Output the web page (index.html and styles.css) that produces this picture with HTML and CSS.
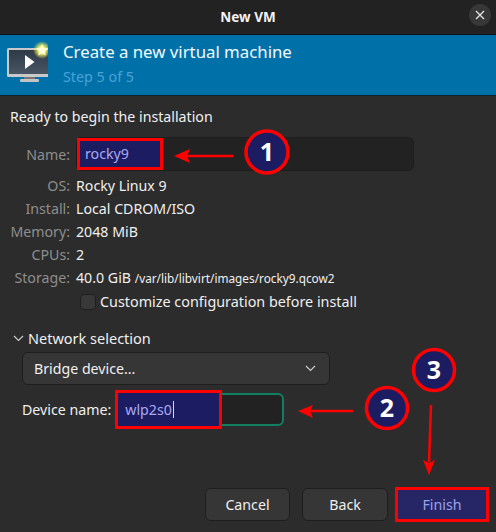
FILE: index.html
```html
<!DOCTYPE html>
<html lang="en">
<head>
<meta charset="utf-8">
<title>New VM</title>
<link rel="stylesheet" href="styles.css">
</head>
<body>
<div class="window">
  <header class="titlebar">
    <span class="title">New VM</span>
    <span class="close"><svg width="10" height="10" viewBox="0 0 10 10"><path d="M1 1L9 9M9 1L1 9" stroke="#e6e6e6" stroke-width="1.3" fill="none"/></svg></span>
  </header>
  <section class="banner">
    <svg class="vm-icon" width="48" height="44" viewBox="0 0 48 44">
      <defs>
        <radialGradient id="glow"><stop offset="0.4" stop-color="#f4f25a"/><stop offset="1" stop-color="#f4f25a" stop-opacity="0"/></radialGradient>
        <linearGradient id="scr" x1="0" y1="0" x2="0" y2="1"><stop offset="0" stop-color="#2f3a48"/><stop offset="1" stop-color="#4a5563"/></linearGradient>
      </defs>
      <rect x="7" y="9" width="44" height="29" rx="1.5" fill="#c9c9c9"/>
      <rect x="9" y="11" width="39" height="24" fill="url(#scr)"/>
      <path d="M25 16L34.500 23L25 30Z" fill="#fff"/>
      <rect x="24" y="38" width="11" height="3" fill="#777"/>
      <rect x="20" y="40" width="19" height="3" rx="1" fill="#c4c4c4"/>
      <circle cx="42" cy="11" r="9" fill="url(#glow)"/>
      <path d="M42 5L43.800 9L48 9.400L44.800 12.200L45.800 16.500L42 14.200L38.200 16.500L39.200 12.200L36 9.400L40.200 9Z" fill="#fffde0"/>
    </svg>
    <div class="banner-text">
      <div class="banner-title">Create a new virtual machine</div>
      <div class="banner-step">Step 5 of 5</div>
    </div>
  </section>
  <main class="content">
    <p class="ready">Ready to begin the installation</p>
    <div class="summary">
      <span class="label name-label">Name:</span>
      <div class="entry name-entry"><span class="hl">rocky9</span></div>
      <span class="label">OS:</span><span class="value">Rocky Linux 9</span>
      <span class="label">Install:</span><span class="value">Local CDROM/ISO</span>
      <span class="label">Memory:</span><span class="value">2048 MiB</span>
      <span class="label">CPUs:</span><span class="value">2</span>
      <span class="label">Storage:</span><span class="value">40.0 GiB <small class="path">/var/lib/libvirt/images/rocky9.qcow2</small></span>
    </div>
    <label class="check-row"><span class="check"></span><span>Customize configuration before install</span></label>
    <div class="expander">
      <svg width="11" height="7" viewBox="0 0 11 7"><path d="M1 1L5.500 5.500L10 1" stroke="#d0d0d0" stroke-width="1.1" fill="none"/></svg>
      <span>Network selection</span>
    </div>
    <div class="network">
      <div class="combo"><span>Bridge device...</span>
        <svg width="11" height="7" viewBox="0 0 11 7"><path d="M1 1L5.500 5.500L10 1" stroke="#d0d0d0" stroke-width="1.1" fill="none"/></svg>
      </div>
      <div class="device-row">
        <span>Device name:</span>
        <div class="entry device-entry"><span class="hl2">wlp2s0<i class="caret"></i></span></div>
      </div>
    </div>
    <footer class="actions">
      <button class="btn cancel">Cancel</button>
      <button class="btn back">Back</button>
      <button class="btn finish">Finish</button>
    </footer>
  </main>
  <svg class="annot" width="496" height="532" viewBox="0 0 496 532">
    <g stroke="#f00" stroke-width="2.500" fill="none">
      <path d="M233 156H186"/>
      <path d="M353 411H309"/>
      <path d="M431 405L429 462"/>
    </g>
    <g fill="#f00">
      <path d="M174 156L190 149L187 156L190 163Z"/>
      <path d="M298 411L313 405L310 411L313 418Z"/>
      <path d="M429 475L423 460L429 463L435 460Z"/>
    </g>
    <g fill="#1c1c63" stroke="#f00" stroke-width="3.500">
      <circle cx="267" cy="152" r="21"/>
      <circle cx="387" cy="408" r="20.500"/>
      <circle cx="434" cy="370" r="20.500"/>
    </g>
    <g class="num">
      <text x="267" y="161">1</text>
      <text x="387" y="417">2</text>
      <text x="434" y="379">3</text>
    </g>
  </svg>
</div>
</body>
</html>
```
FILE: styles.css
```css
* { box-sizing: border-box; }
html, body { margin: 0; padding: 0; }
body {
  width: 496px;
  height: 532px;
  overflow: hidden;
  background: #2c2c2c;
  color: #f0f0f0;
  font-family: "Noto Sans", "Open Sans", sans-serif;
  font-size: 14.200px;
  line-height: 20px;
}
.window { position: relative; width: 496px; height: 532px; display: flex; flex-direction: column; }
.titlebar {
  height: 35px;
  flex: none;
  background: #222;
  border-bottom: 1px solid #111;
  display: flex;
  align-items: center;
  justify-content: center;
  position: relative;
}
.title { font-weight: 700; font-size: 13.500px; color: #f2f2f2; }
.close {
  position: absolute;
  right: 5px;
  top: 4px;
  width: 22px;
  height: 22px;
  border-radius: 50%;
  background: #383838;
  display: flex;
  align-items: center;
  justify-content: center;
}
.banner {
  height: 61px;
  flex: none;
  background: #0071a8;
  border-bottom: 1px solid #12202a;
  display: flex;
  align-items: flex-start;
  padding: 4px 0 0 0;
}
.vm-icon { flex: none; margin-right: 15px; }
.banner-text { padding-top: 1px; }
.banner-title { font-size: 16.800px; line-height: 24px; color: #f2f8fb; }
.banner-step { font-size: 14.300px; line-height: 24px; margin-top: 1px; color: #4aa3d6; }
.content { flex: 1; display: flex; flex-direction: column; padding: 0 8px 10px 10px; min-height: 0; }
.ready { margin: 10px 0 0; line-height: 22px; }
.summary {
  margin: 9px 0 0;
  display: grid;
  grid-template-columns: 60px 338px;
  column-gap: 6px;
  row-gap: 3px;
  align-items: center;
}
.label { text-align: right; color: #8e8e8e; white-space: nowrap; }
.value { white-space: nowrap; color: #f0f0f0; }
.path { font-size: 11.800px; }
.entry { background: #222; border: 1px solid #1d1d1d; border-radius: 6px; }
.name-entry {
  height: 34px;
  display: flex;
  align-items: stretch;
  margin-bottom: 2px;
}
.hl {
  width: 86px;
  background: #1c1c63;
  border: 3px solid #f00;
  color: #a9a9f2;
  padding-left: 5px;
  display: flex;
  align-items: center;
}
.check-row { display: flex; align-items: center; gap: 4px; margin: 4px 0 0 70px; font-size: 14.350px; }
.check { width: 16px; height: 16px; border-radius: 4px; background: #383838; border: 1px solid #1e1e1e; }
.expander { display: flex; align-items: center; gap: 4px; margin: 16px 0 0 3px; font-size: 14.500px; }
.network { margin-left: 12px; }
.combo {
  margin-top: 4px;
  width: 308px;
  height: 33px;
  background: #363636;
  border: 1px solid #1e1e1e;
  border-radius: 6px;
  padding: 0 13px 0 11px;
  display: flex;
  align-items: center;
  justify-content: space-between;
}
.device-row { margin-top: 8px; display: flex; align-items: center; gap: 6px; }
.device-entry {
  width: 167px;
  height: 33px;
  border: 2px solid #128060;
  display: flex;
  background: #222;
}
.hl2 {
  flex: none;
  width: 107px;
  margin: -5px 0 -5px -4px;
  background: #1c1c63;
  border: 3px solid #f00;
  color: #a9a9f2;
  padding-left: 7px;
  display: flex;
  align-items: center;
}
.caret { width: 1px; height: 17px; background: #d8d8ff; margin-left: 1px; }
.actions { margin-top: auto; display: flex; justify-content: flex-end; align-items: center; }
.btn {
  height: 33px;
  border-radius: 6px;
  background: #363636;
  border: 1px solid #1e1e1e;
  color: #efefef;
  font: inherit;
  padding: 0;
}
.cancel { width: 85px; margin-right: 12px; }
.back { width: 86px; margin-right: 7px; }
.finish {
  width: 94px;
  height: 35px;
  margin-right: -1px;
  border: 3px solid #f00;
  border-radius: 0;
  background: #262666;
  color: #9ba2ec;
}
.annot { position: absolute; left: 0; top: 0; pointer-events: none; }
.num text { fill: #fff; font-family: "Noto Sans", sans-serif; font-weight: 700; font-size: 25px; text-anchor: middle; }
```
